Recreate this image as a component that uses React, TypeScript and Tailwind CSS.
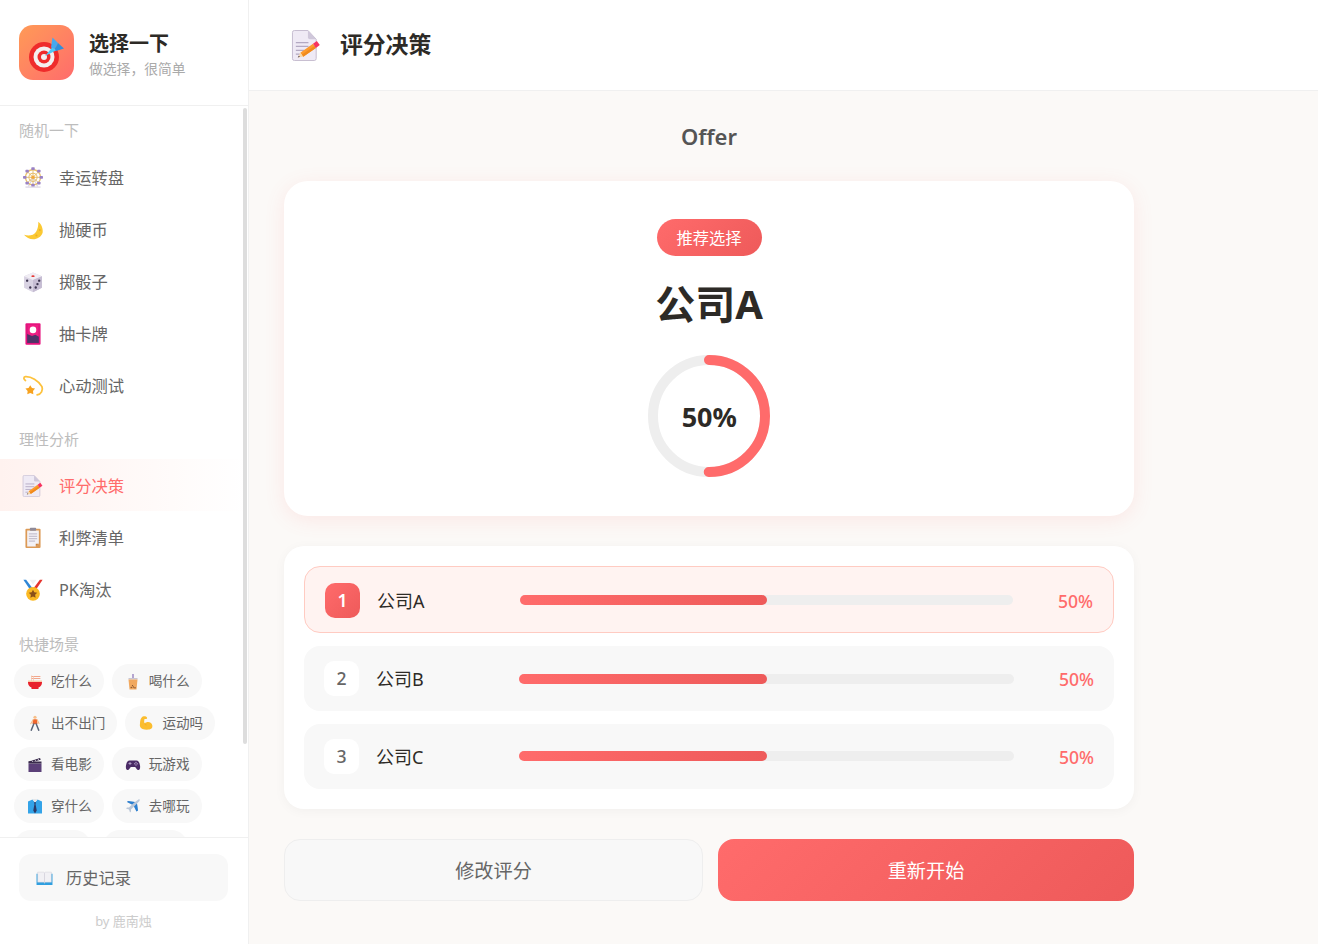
import React from "react";

type P = { className?: string };
const Svg = ({ className, children }: P & { children: React.ReactNode }) => (
  <svg viewBox="0 0 32 32" className={className} aria-hidden="true">{children}</svg>
);

const Wheel = ({ className }: P) => (
  <Svg className={className}>
    <path d="M9 29 16 15l7 14" fill="none" stroke="#d9d3e3" strokeWidth="1.800" />
    <rect x="5" y="28" width="22" height="2.500" fill="#e6e1ec" />
    <circle cx="16" cy="15" r="11" fill="none" stroke="#ecc26a" strokeWidth="2" />
    <circle cx="16" cy="15" r="6" fill="none" stroke="#ecc26a" strokeWidth="1.500" />
    <path d="M16 3v24M4 15h24M7.500 6.500l17 17M24.500 6.500l-17 17" stroke="#e0bd78" strokeWidth="1.400" />
    <g fill="#9a82c4">
      <rect x="13.500" y="0.500" width="5" height="4" rx="1" /><rect x="13.500" y="24.500" width="5" height="4" rx="1" />
      <rect x="1.500" y="13" width="5" height="4" rx="1" /><rect x="25.500" y="13" width="5" height="4" rx="1" />
      <rect x="5" y="4" width="5" height="4" rx="1" /><rect x="22" y="4" width="5" height="4" rx="1" />
      <rect x="5" y="21.500" width="5" height="4" rx="1" /><rect x="22" y="21.500" width="5" height="4" rx="1" />
    </g>
    <circle cx="16" cy="15" r="2.500" fill="#f2a93b" />
  </Svg>
);
const Moon = ({ className }: P) => (
  <Svg className={className}>
    <path d="M23.700 3.900C28 7 31 14 30 20c-2 6-8 9.500-13.600 9.500C11 29.500 6 27 2.900 23c7.100 2 14.100 1 17.600-4.600C23 14 24 9 23.700 3.900z" fill="#fbc933" />
    <circle cx="21" cy="24" r="1.500" fill="#eeaf22" /><circle cx="26" cy="16" r="1.300" fill="#eeaf22" />
  </Svg>
);
const Dice = ({ className }: P) => (
  <Svg className={className}>
    <path d="M16 2 29 7.500v17L16 31 3 24.500v-17z" fill="#d9d3e3" />
    <path d="M16 2 29 7.500 16 13 3 7.500z" fill="#f0edf4" />
    <path d="M16 13v18l13-6.500v-17z" fill="#c6bdd3" />
    <ellipse cx="16" cy="7.500" rx="2.400" ry="1.300" fill="#e53935" />
    <g fill="#3d3550"><circle cx="7.500" cy="14" r="1.700" /><circle cx="12" cy="24" r="1.700" /><circle cx="20" cy="24" r="1.700" /><circle cx="25" cy="14" r="1.700" /><circle cx="22.500" cy="19" r="1.700" /></g>
  </Svg>
);
const Card = ({ className }: P) => (
  <Svg className={className}>
    <rect x="5" y="0.500" width="22" height="31" rx="1.500" fill="#e6137e" />
    <rect x="7.500" y="3" width="17" height="26" fill="#4f3368" />
    <path d="M7.500 3h17v17l-5-3-5 2-7-3z" fill="#ef1d83" />
    <circle cx="16" cy="10" r="4.800" fill="#fff" />
  </Svg>
);
const Dizzy = ({ className }: P) => (
  <Svg className={className}>
    <path d="M5 8C2 6 2 3 5 2.500 13 2 24 8 29 17c2 5-1 11-7 12" fill="none" stroke="#fdc23d" strokeWidth="2.600" strokeLinecap="round" />
    <path d="m12 15 2.500 4 4.500.8-3 3.500.5 4.700-4.500-1.900-4.300 1.900.5-4.700L5 19.800 9.500 19z" fill="#f7a21f" />
  </Svg>
);
const Memo = ({ className }: P) => (
  <svg viewBox="0 0 32 32" className={className} aria-hidden="true">
    <path d="M1.500 2.500a2 2 0 0 1 2-2h14L26 9.500v20a2 2 0 0 1-2 2H3.500a2 2 0 0 1-2-2z" fill="#efeaf5" stroke="#c5bcd0" strokeWidth="1" />
    <path d="M17.500.5v7a2 2 0 0 0 2 2H26z" fill="#cfc7da" />
    <path d="M5 13h13M5 17h13M5 21h9M5 25h4" stroke="#b3a9c2" strokeWidth="1.300" />
    <path d="M12.600 27.700 9.600 23.500 22.700 14.300l3 4.200z" fill="#fd9a2d" />
    <path d="m12.600 27.700-1.500-2.100 13.100-9.200 1.500 2.100z" fill="#f08a1d" />
    <path d="m22.700 14.300 3 4.200 4-2.900-3-4.200z" fill="#f7335f" />
    <path d="m7 28.500 2.600-5 3 4.200z" fill="#f8d9a8" />
    <path d="m7 28.500 1-2 1.300 1.200z" fill="#4a3e50" />
  </svg>
);
const Clipboard = ({ className }: P) => (
  <Svg className={className}>
    <rect x="5" y="2.500" width="22" height="28" rx="1.500" fill="#dc9a56" />
    <path d="M7.500 5h17v19.500l-4.500 4H7.500z" fill="#f3f1f5" />
    <path d="m24.500 24.500-4.500 4v-4z" fill="#c8823f" />
    <rect x="11.500" y="1" width="9" height="4.500" rx="1" fill="#8f8a98" />
    <path d="M10 10h12M10 13.500h12M10 17h12M10 20.500h9" stroke="#b5aec0" strokeWidth="1.300" />
  </Svg>
);
const Medal = ({ className }: P) => (
  <Svg className={className}>
    <path d="M2 1h4l9 12-3 3z" fill="#2f86d6" />
    <path d="M30 1h-4l-9 12 3 3z" fill="#e5342e" />
    <path d="M11 1h10l-5 7z" fill="#f1f1f1" />
    <circle cx="16" cy="21.500" r="10" fill="#fbb924" />
    <path d="m16 15.500 1.900 3.900 4.300.6-3.100 3 .7 4.300-3.800-2-3.800 2 .7-4.300-3.100-3 4.300-.6z" fill="#8a5019" />
  </Svg>
);
const Bowl = ({ className }: P) => (
  <Svg className={className}>
    <path d="M9 5h17M9 9h17" stroke="#f2a68c" strokeWidth="2" strokeLinecap="round" />
    <path d="M9 14V3M13 14V4" stroke="#f5c7ae" strokeWidth="1.500" />
    <rect x="2" y="13" width="28" height="3" fill="#f8c9a8" />
    <path d="M2 16h28v1a11 11 0 0 1-7 10v3H9v-3a11 11 0 0 1-7-10z" fill="#e8212b" />
  </Svg>
);
const Tea = ({ className }: P) => (
  <Svg className={className}>
    <path d="M16 0v8" stroke="#8d74b8" strokeWidth="2.500" />
    <path d="M7 8h18v3H7z" fill="#c9c5d2" />
    <path d="m7 11 2 20h14l2-20z" fill="#f1a960" />
    <g fill="#7a4a2c"><circle cx="12.500" cy="27" r="1.300" /><circle cx="16.500" cy="26" r="1.300" /><circle cx="20" cy="27.500" r="1.300" /><circle cx="15" cy="23" r="1.200" /></g>
  </Svg>
);
const Walker = ({ className }: P) => (
  <Svg className={className}>
    <circle cx="16" cy="4.500" r="3.200" fill="#f7c08a" />
    <path d="M12 8.500h8l1 9.500h-10z" fill="#f1662d" />
    <path d="m12.500 9-5 8.500M20 9l4 8" stroke="#f7c08a" strokeWidth="2.200" strokeLinecap="round" />
    <path d="m13.500 18-5 12.500M18.500 18l5 12.500" stroke="#5a6578" strokeWidth="3" strokeLinecap="round" />
  </Svg>
);
const Muscle = ({ className }: P) => (
  <Svg className={className}>
    <path d="M10 3c3-1 7 0 8 2s-1 3-3 3l-2 0c-1 3-1 6 0 9 3-3 9-4 13-1 3 3 4 8 1 11-4 3-12 3-18 1-5-2-6-6-5-11 0-6 2-13 6-14z" fill="#fbbd2e" />
    <path d="M13 17c1 2 2 3 4 3" fill="none" stroke="#eda21b" strokeWidth="1.300" />
  </Svg>
);
const Clapper = ({ className }: P) => (
  <Svg className={className}>
    <rect x="3" y="13" width="26" height="17" fill="#5b4078" />
    <rect x="3" y="9" width="26" height="4" fill="#3a2c4c" />
    <path d="m3 9 23-7 1.500 3.500L4 12z" fill="#3a2c4c" />
    <path d="m9 7 3 2.500M15 5l3 2.500M21 3.500 24 6" stroke="#f1eef5" strokeWidth="1.500" />
  </Svg>
);
const Gamepad = ({ className }: P) => (
  <Svg className={className}>
    <path d="M9 7h14c4 0 6 4 7 10 1 6-1 10-4 9-3-1-4-5-6-6h-8c-2 1-3 5-6 6-3 1-5-3-4-9 1-6 3-10 7-10z" fill="#4b2c66" />
    <path d="M10 10v6M7 13h6" stroke="#b6a2cc" strokeWidth="1.800" />
    <circle cx="22" cy="11" r="1.300" fill="#b6a2cc" /><circle cx="22" cy="16" r="1.300" fill="#b6a2cc" /><circle cx="19.500" cy="13.500" r="1.300" fill="#b6a2cc" /><circle cx="24.500" cy="13.500" r="1.300" fill="#b6a2cc" />
  </Svg>
);
const Shirt = ({ className }: P) => (
  <Svg className={className}>
    <path d="M2 7 11 3l5 6 5-6 9 4v24H2z" fill="#33a3e8" />
    <path d="m11 3 5 6 5-6-1-1h-8z" fill="#e5e7ea" />
    <path d="m14 9 2-1 2 1-1 3 2.500 13L16 31l-3.500-6L15 12z" fill="#2c3a66" />
  </Svg>
);
const Plane = ({ className }: P) => (
  <Svg className={className}>
    <path d="M27 3c2-1 3 0 2 3L24 11l2 14-3 2-5-10-6 6v4l-2 2-2-6-6-2 2-2h4l6-6L4 8l2-2 14 2z" fill="#b9c6d8" />
    <path d="m24 11 2 14-3 2-5-10zM20 8 6 6 4 8l10 5z" fill="#2a7fd1" />
  </Svg>
);
const Book = ({ className }: P) => (
  <Svg className={className}>
    <path d="M1 7h13c1 0 2 1 2 2 0-1 1-2 2-2h13v21H1z" fill="#2f9fe0" />
    <path d="M3 4h11c1 0 2 1 2 2v19c0-1-1-2-2-2H3zM29 4H18c-1 0-2 1-2 2v19c0-1 1-2 2-2h11z" fill="#f1f0f4" stroke="#c9c5d2" strokeWidth=".7" />
  </Svg>
);
const Target = ({ className }: P) => (
  <svg viewBox="0 0 55 55" className={className} aria-hidden="true">
    <circle cx="25" cy="32" r="15" fill="#ef2b2b" />
    <circle cx="25" cy="32" r="10.500" fill="#f4efef" />
    <circle cx="25" cy="32" r="6.500" fill="#ef2b2b" />
    <circle cx="25" cy="32" r="3" fill="#f4efef" />
    <path d="M26 31 34 21.500l4 3.500z" fill="#4fc8f7" />
    <path d="M32 22.500 33.500 12.500 39 18l-3 6z" fill="#46a8ee" />
    <path d="M36 24 39 18l6 5.500-8 2.500z" fill="#2f8fdc" />
  </svg>
);

const Label = ({ children, className = "" }: { children: React.ReactNode; className?: string }) => (
  <div className={`px-[19px] pb-[2px] text-[15px] leading-[18px] text-[#bdbdbd] ${className}`}>{children}</div>
);

const Item = ({ icon: I, text, active, low }: { icon: React.FC<P>; text: string; active?: boolean; low?: boolean }) => (
  <div
    className={`flex h-[52px] items-center pl-[22px] text-[16.300px] ${low ? "pt-[2px]" : ""} ${
      active ? "bg-gradient-to-r from-[#fff2ef] to-[#ffffff] text-[#ff6b6b]" : "text-[#666666]"
    }`}
  >
    <I className="h-[22px] w-[22px] shrink-0" />
    <span className="ml-[15px]">{text}</span>
  </div>
);

const Chip = ({ icon: I, text }: { icon: React.FC<P>; text: string }) => (
  <div className="flex h-[34px] items-center gap-[7px] rounded-full bg-[#f8f8f8] px-3 pt-[1px] text-[13.600px] text-[#666666]">
    <I className="h-4 w-[18px] shrink-0" />
    <span>{text}</span>
  </div>
);

const Row = ({ n, name, first }: { n: number; name: string; first?: boolean }) => (
  <div
    className={`flex items-center rounded-2xl px-5 ${
      first ? "h-[67px] border border-[#ffcbc2] bg-[#fff3f1]" : "h-[65px] bg-[#f8f8f8]"
    }`}
  >
    <div
      className={`flex h-[35px] w-[35px] shrink-0 items-center justify-center rounded-[10px] text-[17.600px] ${
        first
          ? "mt-[2px] bg-[linear-gradient(135deg,#ff6b6b,#ee5a5a)] font-semibold text-white"
          : "bg-white font-medium text-[#666666]"
      }`}
    >
      {n}
    </div>
    <div className={`ml-[17px] w-[143px] shrink-0 text-[18px] text-[#2d2a26] ${first ? "pt-1" : "pt-[2px]"}`}>{name}</div>
    <div className={`h-[10px] flex-1 rounded-[5px] bg-[#eeeeee] ${n === 3 ? "mb-[1px]" : ""}`}>
      <div className="h-full w-1/2 rounded-[5px] bg-gradient-to-r from-[#ff6b6b] to-[#ee5a5a]" />
    </div>
    <div className={`w-[80px] shrink-0 text-right text-[17.600px] font-medium text-[#ff6b6b] ${first ? "pt-1" : "pt-[2px]"}`}>50%</div>
  </div>
);

export default function App() {
  return (
    <div className="flex h-[944px] w-[1318px] overflow-hidden bg-[#fbf9f7] font-['Noto_Sans','Noto_Sans_CJK_SC',sans-serif] text-[#2d2a26]">
      <aside className="flex h-full w-[249px] shrink-0 flex-col border-r border-[#f0f0f0] bg-white">
        <div className="flex h-[106px] shrink-0 items-center gap-[15px] border-b border-[#f0f0f0] pl-[19px]">
          <div className="h-[55px] w-[55px] shrink-0 rounded-[14px] bg-gradient-to-br from-[#ff9a56] to-[#ff6b6b]">
            <Target className="h-full w-full" />
          </div>
          <div className="pt-1">
            <div className="text-[20px] leading-[27px] font-bold text-[#2d2a26]">选择一下</div>
            <div className="text-[13.800px] leading-[23px] text-[#aaaaaa]">做选择，很简单</div>
          </div>
        </div>

        <div className="relative min-h-0 flex-1 overflow-hidden pt-[15px]">
          <div className="absolute top-[2px] right-[1px] h-[636px] w-[4px] rounded-full bg-[#dddddd]" />
          <Label>随机一下</Label>
          <div className="mt-[11px]">
            <Item icon={Wheel} text="幸运转盘" />
            <Item icon={Moon} text="抛硬币" />
            <Item icon={Dice} text="掷骰子" />
            <Item icon={Card} text="抽卡牌" />
            <Item icon={Dizzy} text="心动测试" />
          </div>
          <Label className="mt-[18px]">理性分析</Label>
          <div className="mt-[9px]">
            <Item icon={Memo} text="评分决策" active low />
            <Item icon={Clipboard} text="利弊清单" low />
            <Item icon={Medal} text="PK淘汰" low />
          </div>
          <Label className="mt-5">快捷场景</Label>
          <div className="mt-[9px] flex w-[220px] flex-wrap gap-x-2 gap-y-[7.500px] pl-[14px]">
            <Chip icon={Bowl} text="吃什么" />
            <Chip icon={Tea} text="喝什么" />
            <Chip icon={Walker} text="出不出门" />
            <Chip icon={Muscle} text="运动吗" />
            <Chip icon={Clapper} text="看电影" />
            <Chip icon={Gamepad} text="玩游戏" />
            <Chip icon={Shirt} text="穿什么" />
            <Chip icon={Plane} text="去哪玩" />
            <div className="h-[34px] w-[77px] rounded-full bg-[#f8f8f8]" />
            <div className="ml-1 h-[34px] w-[85px] rounded-full bg-[#f8f8f8]" />
          </div>
        </div>

        <div className="h-[107px] shrink-0 border-t border-[#f0f0f0] bg-white pt-4 pr-5 pl-[19px]">
          <div className="flex h-[47px] items-center gap-[13px] rounded-xl bg-[#f8f8f8] pt-[2px] pl-[17px] text-[16.300px] text-[#666666]">
            <Book className="h-[17px] w-[17px]" />
            <span>历史记录</span>
          </div>
          <div className="mt-[11px] text-center text-[13px] leading-[18px] text-[#cccccc]">by 鹿南烛</div>
        </div>
      </aside>

      <main className="flex min-w-0 flex-1 flex-col">
        <header className="flex h-[91px] shrink-0 items-center border-b border-[#f0f0f0] bg-white pl-[42px]">
          <Memo className="h-[31px] w-[31px]" />
          <h1 className="ml-[18px] text-[22.800px] font-bold text-[#2d2a26]">评分决策</h1>
        </header>

        <div className="ml-[35px] w-[850px] pt-[29px]">
          <h2 className="text-center text-[22px] leading-[32px] font-semibold text-[#555555]">Offer</h2>

          <section className="mt-[29px] flex h-[335px] flex-col items-center rounded-3xl bg-white pt-[38px] shadow-[0_4px_20px_rgba(255,107,107,0.12)]">
            <div className="flex h-[37px] w-[105px] items-center justify-center rounded-full bg-[linear-gradient(135deg,#ff6b6b,#ee5a5a)] pt-[2px] text-[16.300px] text-white">
              推荐选择
            </div>
            <div className="mt-[18px] text-[40px] leading-[60px] font-bold text-[#2d2a26]">公司A</div>
            <div className="relative mt-[21px] ml-[0.5px] h-[122px] w-[122px]">
              <svg viewBox="0 0 122 122" className="h-full w-full -rotate-90" aria-hidden="true">
                <circle cx="61" cy="61" r="56" fill="none" stroke="#eeeeee" strokeWidth="10" />
                <circle cx="61" cy="61" r="56" fill="none" stroke="#ff6b6b" strokeWidth="10" strokeLinecap="round" strokeDasharray="175.900 351.900" />
              </svg>
              <div className="absolute inset-0 flex items-center justify-center pt-[3px] text-[27px] font-bold text-[#2d2a26]">50%</div>
            </div>
          </section>

          <section className="mt-[30px] flex h-[263px] flex-col gap-[13px] rounded-[20px] bg-white p-5 shadow-[0_2px_12px_rgba(0,0,0,0.04)]">
            <Row n={1} name="公司A" first />
            <Row n={2} name="公司B" />
            <Row n={3} name="公司C" />
          </section>

          <div className="mt-[30px] flex gap-[15px]">
            <button className="flex h-[62px] w-[419px] items-center justify-center rounded-2xl border border-[#eeeeee] bg-[#f8f8f8] pt-[2px] text-[19.200px] text-[#666666]">
              修改评分
            </button>
            <button className="flex h-[62px] flex-1 items-center justify-center rounded-2xl bg-[linear-gradient(135deg,#ff6b6b,#ee5a5a)] pt-[2px] text-[19.200px] text-white">
              重新开始
            </button>
          </div>
        </div>
      </main>
    </div>
  );
}
